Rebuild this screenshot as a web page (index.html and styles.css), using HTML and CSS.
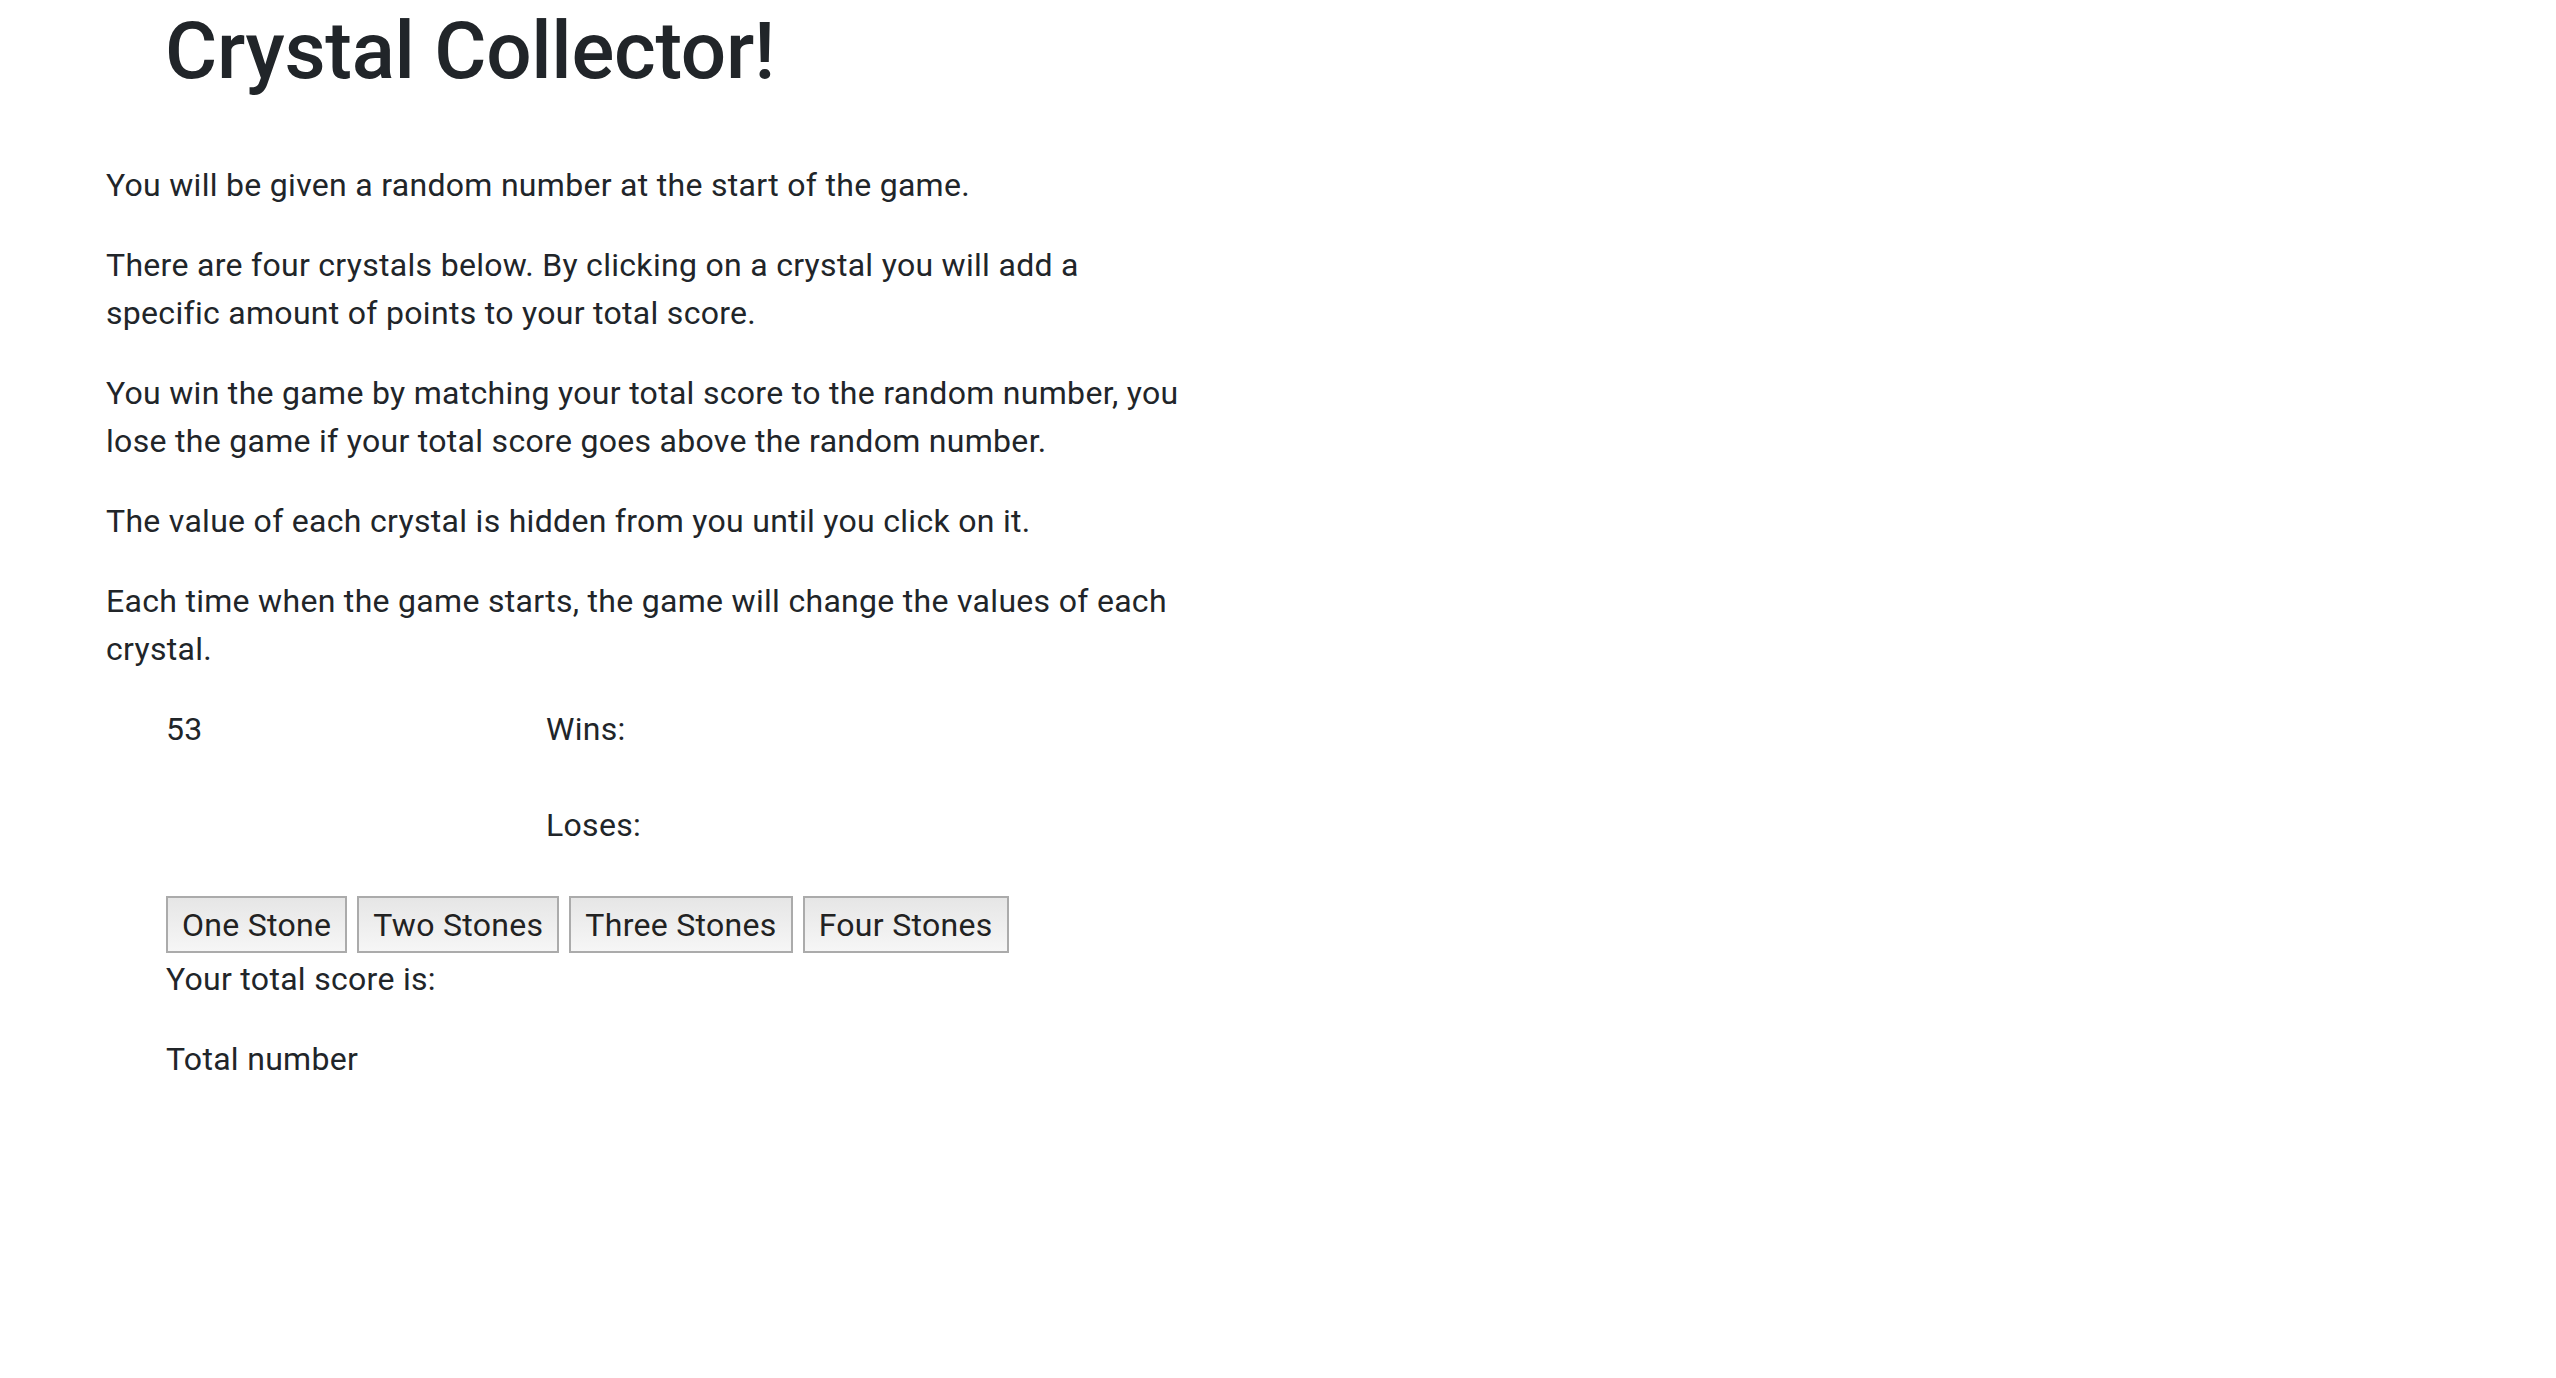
FILE: index.html
```html
<!DOCTYPE html>
<html lang="en">
<head>
<meta charset="utf-8">
<title>Crystal Collector</title>
<link rel="stylesheet" href="styles.css">
</head>
<body>
<main class="page">
  <h1 class="title">Crystal Collector!</h1>
  <section class="rules">
    <p>You will be given a random number at the start of the game.</p>
    <p>There are four crystals below. By clicking on a crystal you will add a specific amount of points to your total score.</p>
    <p>You win the game by matching your total score to the random number, you lose the game if your total score goes above the random number.</p>
    <p>The value of each crystal is hidden from you until you click on it.</p>
    <p>Each time when the game starts, the game will change the values of each crystal.</p>
  </section>
  <section class="game">
    <div class="scoreboard">
      <div class="target">53</div>
      <div class="tally">
        <p class="wins">Wins:</p>
        <p class="loses">Loses:</p>
      </div>
    </div>
    <div class="stones">
      <button class="stone" type="button">One Stone</button>
      <button class="stone" type="button">Two Stones</button>
      <button class="stone" type="button">Three Stones</button>
      <button class="stone" type="button">Four Stones</button>
    </div>
    <p class="total-label">Your total score is:</p>
    <p class="total">Total number</p>
  </section>
</main>
</body>
</html>
```
FILE: styles.css
```css
html, body {
  margin: 0;
  padding: 0;
  background: #ffffff;
}

body {
  font-family: Roboto, "Liberation Sans", Arial, sans-serif;
  font-size: 32px;
  line-height: 48px;
  color: #212529;
  letter-spacing: 0.3px;
}

.page {
  padding-left: 106px;
}

.title {
  margin: 0 0 62px 59px;
  padding-top: 3px;
  font-size: 80px;
  line-height: 96px;
  font-weight: 500;
  letter-spacing: -0.3px;
}

.rules {
  width: 1085px;
}

.rules p {
  margin: 0 0 32px 0;
}

.game {
  margin-left: 60px;
}

.scoreboard {
  display: grid;
  grid-template-columns: 380px auto;
}

.target {
  line-height: 48px;
}

.tally p {
  margin: 0;
}

.tally .wins {
  margin-bottom: 48px;
}

.stones {
  display: flex;
  gap: 10px;
  margin-top: 47px;
}

.stone {
  height: 57px;
  padding: 0 14px;
  margin: 0;
  border: 2px solid #ababab;
  border-radius: 0;
  background: linear-gradient(#e6e6e6, #f6f6f6);
  color: #222222;
  font-family: inherit;
  font-size: 32px;
  letter-spacing: 0.3px;
  line-height: 1;
}

.total-label {
  margin: 2px 0 32px 0;
}

.total {
  margin: 0;
}
```
